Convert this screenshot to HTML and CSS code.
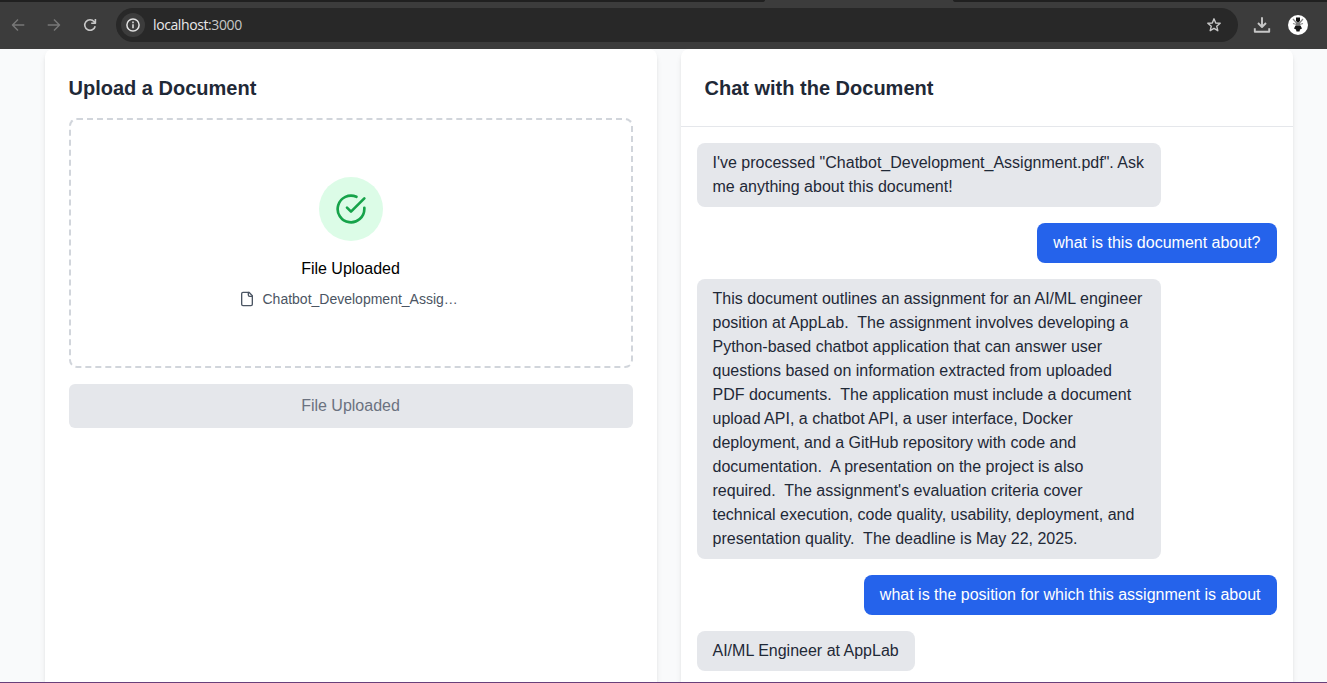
FILE: index.html
```html
<!DOCTYPE html>
<html lang="en">
<head>
<meta charset="utf-8">
<title>Document chat</title>
<link rel="stylesheet" href="styles.css">
</head>
<body>
<header class="browser">
  <div class="tabstrip"><span class="tab-left"></span><span class="tab-right"></span></div>
  <div class="toolbar">
    <svg class="nav dim" viewBox="0 0 16 16"><path d="M14.3 8H2.6M8 2.5 2.5 8 8 13.5"/></svg>
    <svg class="nav dim" viewBox="0 0 16 16"><path d="M1.7 8h11.7M8 2.5 13.5 8 8 13.5"/></svg>
    <svg class="nav" viewBox="0 0 16 16"><path d="M13.2 9.2A5.3 5.3 0 1 1 12.2 4.7L13.3 6M13.4 2v4.2H9.2"/></svg>
    <div class="address">
      <span class="info"><svg viewBox="0 0 16 16"><circle cx="8" cy="8" r="6.1"/><path d="M8 7.3v4M8 4.6v1.6"/></svg></span>
      <span class="url">localhost<span class="port">:3000</span></span>
      <svg class="star" viewBox="0 0 16 16"><path d="M8 1.8 9.7 6l4.5.3-3.5 2.9 1.1 4.5L8 11.3l-3.8 2.4 1.1-4.5L1.8 6.3 6.3 6Z"/></svg>
    </div>
    <svg class="download" viewBox="0 0 18 18"><path d="M9 1.2v9.5M5 7l4 4 4-4M1.8 12.2v3.6h14.4v-3.6"/></svg>
    <svg class="avatar" viewBox="0 0 20 20"><circle cx="10" cy="10" r="10" fill="#fff"/><path d="M8 2.5h4v3l-1 2H9l-1-2Z" fill="#111"/><path d="m5 4 4 4.5M15 4l-4 4.500M5 8.500l3.500 1M15 8.500l-3.500 1" stroke="#888" stroke-width="1.300"/><path d="M8 7.500h4v3H8Z" fill="#777"/><path d="M7.500 10.500h5l1.500 3-2 1-.5 2h-3l-.5-2-2-1Z" fill="#161616"/></svg>
  </div>
</header>
<main class="page">
  <section class="card upload">
    <h2>Upload a Document</h2>
    <div class="dropzone">
      <div class="badge"><svg viewBox="0 0 24 24"><path d="M22 11.08V12a10 10 0 1 1-5.93-9.14"/><path d="m9 11 3 3L22 4"/></svg></div>
      <p class="status">File Uploaded</p>
      <p class="file"><svg viewBox="0 0 24 24"><path d="M15 2H6a2 2 0 0 0-2 2v16a2 2 0 0 0 2 2h12a2 2 0 0 0 2-2V7Z"/><path d="M14 2v4a2 2 0 0 0 2 2h4"/></svg><span>Chatbot_Development_Assig…</span></p>
    </div>
    <button class="submit" disabled>File Uploaded</button>
  </section>
  <section class="card chat">
    <div class="chat-head"><h2>Chat with the Document</h2></div>
    <div class="messages">
      <div class="msg bot">I've processed "Chatbot_Development_Assignment.pdf". Ask me anything about this document!</div>
      <div class="msg user">what is this document about?</div>
      <div class="msg bot">This document outlines an assignment for an AI/ML engineer position at AppLab.  The assignment involves developing a Python-based chatbot application that can answer user questions based on information extracted from uploaded PDF documents.  The application must include a document upload API, a chatbot API, a user interface, Docker deployment, and a GitHub repository with code and documentation.  A presentation on the project is also required.  The assignment's evaluation criteria cover technical execution, code quality, usability, deployment, and presentation quality.  The deadline is May 22, 2025.</div>
      <div class="msg user">what is the position for which this assignment is about</div>
      <div class="msg bot">AI/ML Engineer at AppLab</div>
    </div>
  </section>
</main>
<footer class="edge"></footer>
</body>
</html>
```
FILE: styles.css
```css
* { box-sizing: border-box; }
body {
  margin: 0;
  height: 683px;
  overflow: hidden;
  display: flex;
  flex-direction: column;
  background: #f9fafb;
  color: #1f2937;
  font: 16px/24px "Liberation Sans", Arial, sans-serif;
}
h2, p { margin: 0; }
svg { fill: none; stroke-linejoin: round; flex: none; }

.browser { height: 49px; flex: none; background: #3c3c3c; }
.tabstrip { height: 2px; display: flex; justify-content: space-between; }
.tab-left { width: 765px; background: #202020; border-bottom-right-radius: 3px 2px; }
.tab-right { width: 374px; background: #202020; border-bottom-left-radius: 3px 2px; }
.toolbar { height: 46px; display: flex; align-items: center; padding-left: 10px; }
.nav { width: 16px; height: 16px; margin-right: 20px; stroke: #c7c7c7; stroke-width: 1.6; }
.nav.dim { stroke: #777; stroke-width: 1.5; }
.address {
  width: 1122px;
  height: 34px;
  margin-left: -2px;
  border-radius: 17px;
  background: #282828;
  display: flex;
  align-items: center;
  padding: 0 16px 0 5px;
}
.info { width: 24px; height: 24px; border-radius: 50%; background: #3c3c3c; display: grid; place-items: center; }
.info svg { width: 16px; height: 16px; stroke: #e3e3e3; stroke-width: 1.5; }
.url { margin-left: 8px; flex: 1; font: 14px/20px "Open Sans", "Noto Sans", sans-serif; letter-spacing: -0.4px; color: #e8e8e8; }
.port { color: #c7c7c7; }
.star { width: 16px; height: 16px; stroke: #c7c7c7; stroke-width: 1.4; }
.download { width: 18px; height: 18px; margin-left: 15px; stroke: #c7c7c7; stroke-width: 1.9; }
.avatar { width: 20px; height: 20px; margin-left: 17px; }

.page { flex: 1; min-height: 0; display: flex; gap: 24px; padding-left: 44.5px; overflow: hidden; }
.card {
  width: 612px;
  border-radius: 8px 8px 0 0;
  background: #fff;
  box-shadow: 0 4px 6px -1px rgba(0,0,0,.1), 0 2px 4px -2px rgba(0,0,0,.1);
}
.card h2 { font-size: 20px; line-height: 28px; font-weight: 700; }
.upload { padding: 25px 24px; }
.dropzone {
  height: 250px;
  margin-top: 16px;
  border: 2px dashed #d1d5db;
  border-radius: 8px;
  display: flex;
  flex-direction: column;
  align-items: center;
  padding-top: 57px;
}
.badge { width: 64px; height: 64px; border-radius: 50%; background: #dcfce7; display: grid; place-items: center; }
.badge svg { width: 32px; height: 32px; stroke: #16a34a; stroke-width: 2; stroke-linecap: round; }
.status { margin-top: 16px; color: #000; }
.file { margin-top: 8px; display: flex; align-items: center; gap: 8px; font-size: 14px; line-height: 20px; color: #4b5563; }
.file svg { width: 16px; height: 16px; stroke: #4b5563; stroke-width: 2; stroke-linecap: round; }
.file span { width: 200px; white-space: nowrap; }
.submit {
  width: 100%;
  height: 44px;
  margin-top: 16px;
  border: 0;
  border-radius: 6px;
  background: #e5e7eb;
  color: #6b7280;
  font: 16px/24px "Liberation Sans", Arial, sans-serif;
}
.chat-head { height: 78px; padding: 25px 24px 0; border-bottom: 1px solid #e5e7eb; }
.messages { display: flex; flex-direction: column; gap: 16px; padding: 16px 16px 11px; }
.msg { max-width: 464px; padding: 8px 16px; border-radius: 8px; white-space: pre-wrap; }
.bot { align-self: flex-start; background: #e5e7eb; }
.user { align-self: flex-end; background: #2563eb; color: #fff; }
.edge { height: 1px; flex: none; background: #68407a; }
```
